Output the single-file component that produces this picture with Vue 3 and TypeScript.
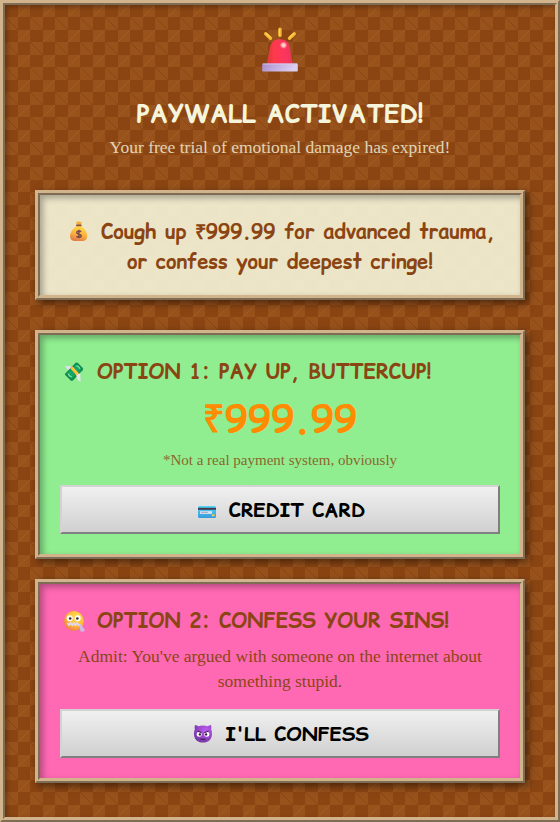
<script setup lang="ts">
import { ref } from 'vue'

const price = ref<string>('₹999.99')
const sin = ref<string>("You've argued with someone on the internet about something stupid.")
</script>

<template>
  <main class="paywall">
    <header class="head">
      <svg class="siren" viewBox="0 0 36 46" aria-hidden="true">
        <defs>
          <linearGradient id="dome" x1="0" y1="0" x2="1" y2="0">
            <stop offset="0" stop-color="#d93a3c" />
            <stop offset="0.3" stop-color="#ff3a4c" />
            <stop offset="0.75" stop-color="#fb3460" />
            <stop offset="1" stop-color="#dc3c50" />
          </linearGradient>
          <linearGradient id="base" x1="0" y1="0" x2="1" y2="0.2">
            <stop offset="0" stop-color="#a78ac8" />
            <stop offset="0.4" stop-color="#bfa9dd" />
            <stop offset="1" stop-color="#dcd0f0" />
          </linearGradient>
          <radialGradient id="shine">
            <stop offset="0" stop-color="#ffe3df" />
            <stop offset="0.5" stop-color="#ffb1b0" />
            <stop offset="1" stop-color="#ff6470" stop-opacity="0" />
          </radialGradient>
        </defs>
        <g stroke="#f2b632" stroke-width="3.4" stroke-linecap="round">
          <path d="M18 2.2v6.2M3.7 6.7l4.8 4.6M32.3 6.7l-4.8 4.6" />
        </g>
        <g stroke="#ffd84d" stroke-width="1.2" stroke-linecap="round">
          <path d="M17.4 2.2v6M3.9 6.2l4.4 4.2M31.8 6.4l-4.2 4.2" />
        </g>
        <path d="M4.5 38 8.2 19.5C9.600 14.800 12.500 12.200 17.800 12.200s8.700 2.700 9.900 7.400L31.200 38z" fill="url(#dome)" />
        <circle cx="21.5" cy="18.2" r="4" fill="url(#shine)" />
        <rect x="0.2" y="36.5" width="35.6" height="8" rx="1" fill="url(#base)" />
        <path d="M1 37h34" stroke="#ddceec" stroke-width="0.8" />
      </svg>
      <h1>PAYWALL ACTIVATED!</h1>
      <p class="subtitle">Your free trial of emotional damage has expired!</p>
    </header>

    <section class="card notice">
      <svg class="icon" viewBox="0 0 24 24" aria-hidden="true">
        <defs>
          <linearGradient id="bag" x1="0.6" y1="0" x2="0.3" y2="1">
            <stop offset="0" stop-color="#ffdb45" />
            <stop offset="0.55" stop-color="#fdb03c" />
            <stop offset="1" stop-color="#df774b" />
          </linearGradient>
        </defs>
        <path d="M9 2.6l1.5.7 1.3-1.2 1.3 1.2 1.8-.7-1 3.6h-4z" fill="#f3ae38" />
        <path d="M9.4 7h4.900c3.100 2.600 6 6.200 6 10 0 3.400-2 5-4.800 5H8c-3 0-5-1.600-5-5 0-3.800 3.200-7.400 6.400-10z" fill="url(#bag)" />
        <rect x="9" y="5.6" width="5.7" height="1.7" rx="0.8" fill="#8a5247" />
        <path d="M14.100 12.700c-.7-1-4.400-1.200-4.400.8 0 2.100 4.500 1 4.500 3.200 0 2-3.800 1.800-4.700.5M11.900 10.700v8.600" fill="none" stroke="#7c4a4a" stroke-width="1.5" />
      </svg>Cough up {{ price }} for advanced trauma, or confess your deepest cringe!
    </section>

    <section class="card pay">
      <h2>
        <svg class="icon" viewBox="0 0 24 24" aria-hidden="true">
          <path d="M2.300 6.200 8.500 6l3 4.200-4 1.300-.8-1.600-2-.6-.3-1.700z" fill="#e6dced" />
          <path d="M3.200 13.500 13.700 2.800q1.200-.7 2.300.3l4.800 5q.8 1.100-.2 2.200L10.900 20.500q-1.100.8-2.200-.1L3.200 15q-.5-.8 0-1.500z" fill="#108a51" />
          <path d="M4.500 13.500 14.500 4l5.100 5.300L9.800 19z" fill="#14a660" />
          <path d="m8.300 8.300 2.100-2.100 6.600 7.300-2.200 2.200z" fill="#ffc340" />
          <path d="M6.500 13.500q.2 2.800 3.300 3.300M14.300 5.800q2.800.2 3.500 3" fill="none" stroke="#7bdca1" stroke-width="1.3" />
          <path d="m14.300 15 3.900-1.800.4 8.500c-2.400-.4-3.600-2.600-4.300-6.700z" fill="#e9e2ef" />
        </svg>
        <span>OPTION 1: PAY UP, BUTTERCUP!</span>
      </h2>
      <div class="price">{{ price }}</div>
      <p class="fine">*Not a real payment system, obviously</p>
      <button type="button">
        <svg class="icon" viewBox="0 0 24 24" aria-hidden="true">
          <defs>
            <linearGradient id="plastic" x1="0" y1="0" x2="0" y2="1">
              <stop offset="0" stop-color="#54d5f4" />
              <stop offset="1" stop-color="#359bdc" />
            </linearGradient>
          </defs>
          <rect x="3" y="9" width="18" height="12" rx="1.5" fill="url(#plastic)" />
          <rect x="3" y="10.8" width="18" height="2" fill="#42394f" />
          <rect x="5" y="14.1" width="12" height="2.8" fill="#d9e2f0" />
          <path d="M6 15.3h7" stroke="#9397a8" stroke-width="0.8" />
          <circle cx="18.2" cy="18.3" r="1.3" fill="#f7cb3c" />
        </svg>
        <span>CREDIT CARD</span>
      </button>
    </section>

    <section class="card confess">
      <h2>
        <svg class="icon" viewBox="0 0 24 24" aria-hidden="true">
          <defs>
            <radialGradient id="face" cx="0.65" cy="0.3" r="0.75">
              <stop offset="0" stop-color="#ffdf49" />
              <stop offset="0.6" stop-color="#ffb83d" />
              <stop offset="1" stop-color="#ee7b4b" />
            </radialGradient>
          </defs>
          <circle cx="11.8" cy="12" r="10" fill="url(#face)" />
          <circle cx="7.7" cy="9.3" r="3" fill="#fff" />
          <circle cx="15.7" cy="9.3" r="3" fill="#fff" />
          <circle cx="8.2" cy="9.5" r="1.3" fill="#36263b" />
          <circle cx="15.3" cy="9.5" r="1.3" fill="#36263b" />
          <path d="m5.500 14 1.600 2.200L8.700 14l1.600 2.200 1.600-2.200 1.600 2.200 1.600-2.200 1.600 2.200 1.500-.4" fill="none" stroke="#e2d7ef" stroke-width="1.8" stroke-linejoin="round" />
          <path d="m17.300 15.500 2.200-.5 1 3 2.300 2.700q0 1.700-2.300 2.100-2 .1-2.300-1.600z" fill="#cdbde3" />
        </svg>
        <span>OPTION 2: CONFESS YOUR SINS!</span>
      </h2>
      <p class="sin">Admit: {{ sin }}</p>
      <button type="button">
        <svg class="icon" viewBox="0 0 24 24" aria-hidden="true">
          <defs>
            <radialGradient id="imp" cx="0.65" cy="0.3" r="0.75">
              <stop offset="0" stop-color="#bb5cf0" />
              <stop offset="0.6" stop-color="#9644c6" />
              <stop offset="1" stop-color="#7035a0" />
            </radialGradient>
          </defs>
          <path d="M4 4q2 .3 3.300 1.200Q12 3.600 16.700 5.200 18 4.300 20 4q.8 2.400.2 4.500Q21 10 21 12.700C21 18.200 17.500 21.500 12 21.500s-9-3.300-9-8.800Q3 10 3.800 8.500 3.200 6.400 4 4z" fill="url(#imp)" />
          <circle cx="8.2" cy="13.2" r="2.5" fill="#fff" />
          <circle cx="15.8" cy="13.2" r="2.5" fill="#fff" />
          <circle cx="8.9" cy="13.4" r="1.2" fill="#35203f" />
          <circle cx="15.1" cy="13.4" r="1.2" fill="#35203f" />
          <path d="m6.500 10 4 1.800M17.500 10l-4 1.800" stroke="#43205b" stroke-width="1.1" />
          <path d="M9.500 17.800q2.500 1.300 5 0" fill="none" stroke="#43205b" stroke-width="1.3" />
        </svg>
        <span>I'LL CONFESS</span>
      </button>
    </section>
  </main>
</template>

<style>
body {
  margin: 0;
}
</style>

<style scoped>
.paywall {
  --check: rgba(205, 133, 63, 0.2);
  box-sizing: border-box;
  min-height: 822px;
  padding: 20px 30px 34px;
  border: 5px ridge #d2b48c;
  background-color: #8b4513;
  background-image:
    linear-gradient(45deg, var(--check) 25%, transparent 25%),
    linear-gradient(-45deg, var(--check) 25%, transparent 25%),
    linear-gradient(45deg, transparent 75%, var(--check) 75%),
    linear-gradient(-45deg, transparent 75%, var(--check) 75%);
  background-size: 25px 25px;
  background-position: 0 0, 0 12px, 13px -13px, -12px 0;
  box-shadow: inset 2px 2px 5px rgba(0, 0, 0, 0.3);
  color: #8b4513;
  font-family: "Liberation Serif", serif;
  text-align: center;
}

.head {
  height: 163px;
}

.siren {
  display: block;
  width: 36px;
  height: 46px;
  margin: 2px auto 0;
}

h1,
h2,
p {
  margin: 0;
}

h1,
h2,
.notice,
.price,
button {
  font-family: "Comic Relief", "Comic Sans MS", "Comic Neue", cursive;
  font-weight: 700;
}

h1 {
  margin-top: 22px;
  color: #f5f5dc;
  font-size: 25px;
  line-height: 38px;
}

.subtitle {
  margin-top: -1px;
  color: #f5f5dc;
  font-size: 17.5px;
  line-height: 30px;
  opacity: 0.8;
}

.card {
  box-sizing: border-box;
  padding: 20px;
  border: 5px ridge #d2b48c;
  box-shadow:
    inset 3px 3px 6px rgba(0, 0, 0, 0.3),
    3px 3px 8px rgba(0, 0, 0, 0.5);
}

.icon {
  flex: none;
  width: 24px;
  height: 24px;
}

.notice {
  height: 110px;
  padding-top: 22px;
  background: rgba(245, 245, 220, 0.9);
  font-size: 20px;
  line-height: 30px;
}

.notice .icon {
  margin: 0 10px 0 2px;
  vertical-align: -4px;
}

.pay {
  height: 229px;
  margin-top: 30px;
  background: #90ee90;
}

.confess {
  height: 204px;
  margin-top: 20px;
  background: #ff69b4;
}

h2 {
  display: flex;
  align-items: center;
  gap: 11px;
  height: 32px;
  margin-bottom: -2px;
  padding: 1px 0 0 2px;
  font-size: 20px;
  line-height: 30px;
}

h2 .icon {
  margin-bottom: 1px;
}

.price {
  margin-top: 3px;
  color: #ff8c00;
  font-size: 38px;
  line-height: 60px;
}

.fine {
  margin-top: -1px;
  font-size: 15px;
  line-height: 24px;
  opacity: 0.8;
}

.sin {
  margin-top: 9px;
  font-size: 17.5px;
  line-height: 25px;
}

button {
  box-sizing: border-box;
  display: flex;
  align-items: center;
  justify-content: center;
  gap: 10px;
  width: 100%;
  height: 49px;
  margin-top: 13px;
  padding: 1px 0 0;
  border: 2px outset #d3d3d3;
  background: linear-gradient(#f0f0f0, #d0d0d0);
  color: #000;
  font-size: 19.5px;
}

button .icon {
  margin-bottom: 2px;
}

.confess button {
  margin-top: 15px;
}
</style>
